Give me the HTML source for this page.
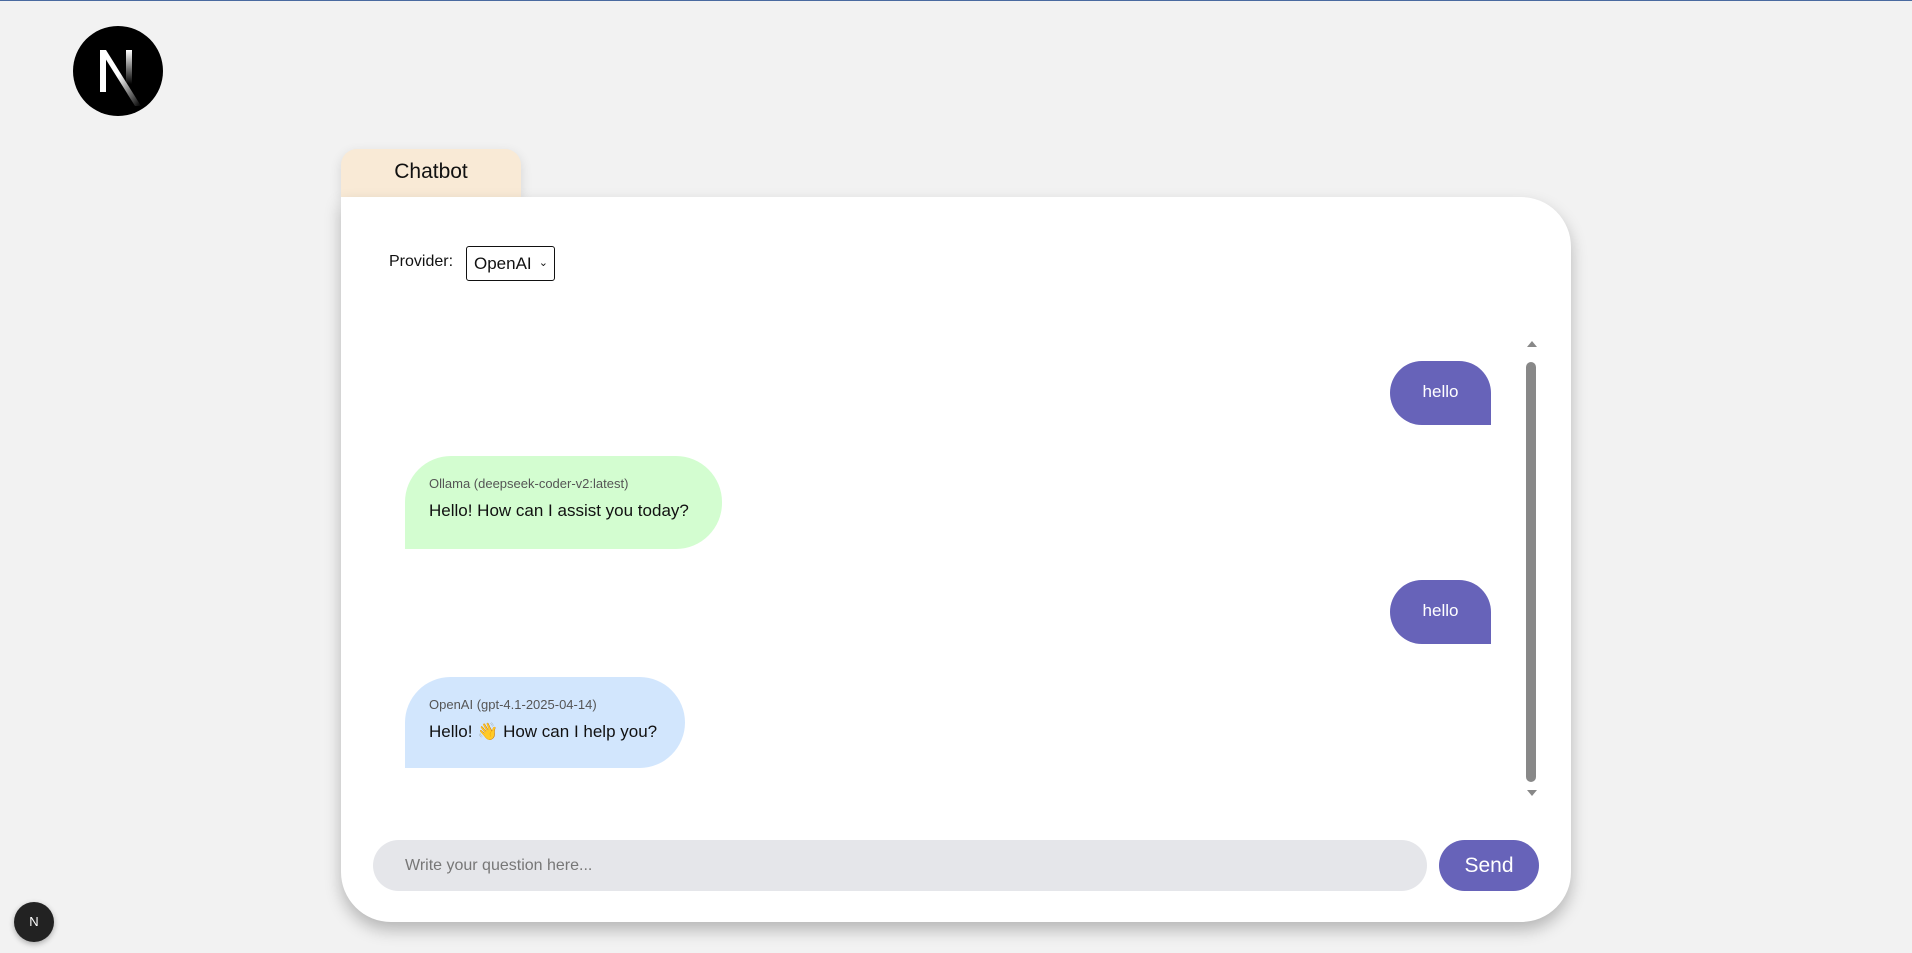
<!DOCTYPE html>
<html><head><meta charset="utf-8"><style>
*{box-sizing:border-box;margin:0;padding:0}
body{width:1912px;height:953px;background:#f2f2f2;font-family:"Liberation Sans",sans-serif;position:relative;overflow:hidden;border-top:1px solid #4a6aa0}
.abs{position:absolute}
.tab{left:341px;top:148px;width:180px;height:49px;background:#f9ead6;border-radius:16px 16px 0 0;box-shadow:0 4px 12px rgba(0,0,0,.12);font-size:21px;color:#111;text-align:center;line-height:46px}
.card{left:341px;top:196px;width:1230px;height:725px;background:#fff;border-radius:0 50px 50px 50px;box-shadow:0 8px 16px rgba(0,0,0,.25)}
.hello{width:101px;height:64px;background:#6763b9;color:#fff;font-size:17px;text-align:center;line-height:62px;border-radius:32px 32px 0 32px;left:1390px}
.bot{left:405px;border-radius:46px 46px 46px 0;padding:0 24px}
.lbl{font-size:13px;color:#555;position:absolute;left:24px;top:20px;white-space:nowrap}
.msg{font-size:17px;color:#111;position:absolute;left:24px;top:45px;white-space:nowrap}
</style></head><body>
<svg class="abs" style="left:73px;top:25px" width="90" height="90" viewBox="0 0 90 90">
<defs><linearGradient id="g" x1="0" y1="0" x2="1" y2="1"><stop offset="0.45" stop-color="#fff"/><stop offset="1" stop-color="#fff" stop-opacity="0"/></linearGradient>
<linearGradient id="g2" x1="0" y1="0" x2="0" y2="1"><stop offset="0" stop-color="#fff"/><stop offset="1" stop-color="#fff" stop-opacity="0"/></linearGradient></defs>
<circle cx="45" cy="45" r="45" fill="#000"/>
<rect x="27" y="24" width="6" height="42" fill="#fff"/>
<path d="M27 24 L33 24 L68 80 L62 80 Z" fill="url(#g)"/>
<rect x="53" y="24" width="6" height="34" fill="url(#g2)"/>
</svg>
<div class="abs tab">Chatbot</div>
<div class="abs card"></div>
<div class="abs" style="left:389px;top:252px;font-size:16px;color:#111">Provider:</div>
<div class="abs" style="left:466px;top:245px;width:89px;height:35px;border:1px solid #111;border-radius:3px;font-size:17px;line-height:33px;padding-left:7px;color:#111">OpenAI<span style="position:absolute;right:6px;top:0;font-size:11px">&#8964;</span></div>
<div class="abs" style="left:1527px;top:340px;width:0;height:0;border-left:5px solid transparent;border-right:5px solid transparent;border-bottom:6px solid #888"></div>
<div class="abs" style="left:1526px;top:361px;width:10px;height:420px;background:#888;border-radius:5px"></div>
<div class="abs" style="left:1527px;top:789px;width:0;height:0;border-left:5px solid transparent;border-right:5px solid transparent;border-top:6px solid #888"></div>
<div class="abs hello" style="top:360px">hello</div>
<div class="abs bot" style="top:455px;width:317px;height:93px;background:#d3fdd0"><span class="lbl">Ollama (deepseek-coder-v2:latest)</span><span class="msg">Hello! How can I assist you today?</span></div>
<div class="abs hello" style="top:579px">hello</div>
<div class="abs bot" style="top:676px;width:280px;height:91px;background:#d2e6fd"><span class="lbl">OpenAI (gpt-4.1-2025-04-14)</span><span class="msg">Hello! 👋 How can I help you?</span></div>
<div class="abs" style="left:373px;top:839px;width:1054px;height:51px;background:#e5e6ea;border-radius:26px;font-size:16px;color:#777;line-height:51px;padding-left:32px">Write your question here...</div>
<div class="abs" style="left:1439px;top:839px;width:100px;height:51px;background:#6763b9;border-radius:26px;font-size:21px;color:#fff;text-align:center;line-height:51px">Send</div>
<div class="abs" style="left:14px;top:901px;width:40px;height:40px;border-radius:50%;background:#222;box-shadow:0 2px 6px rgba(0,0,0,.3);color:#fff;font-size:13px;text-align:center;line-height:40px">N</div>
</body></html>
